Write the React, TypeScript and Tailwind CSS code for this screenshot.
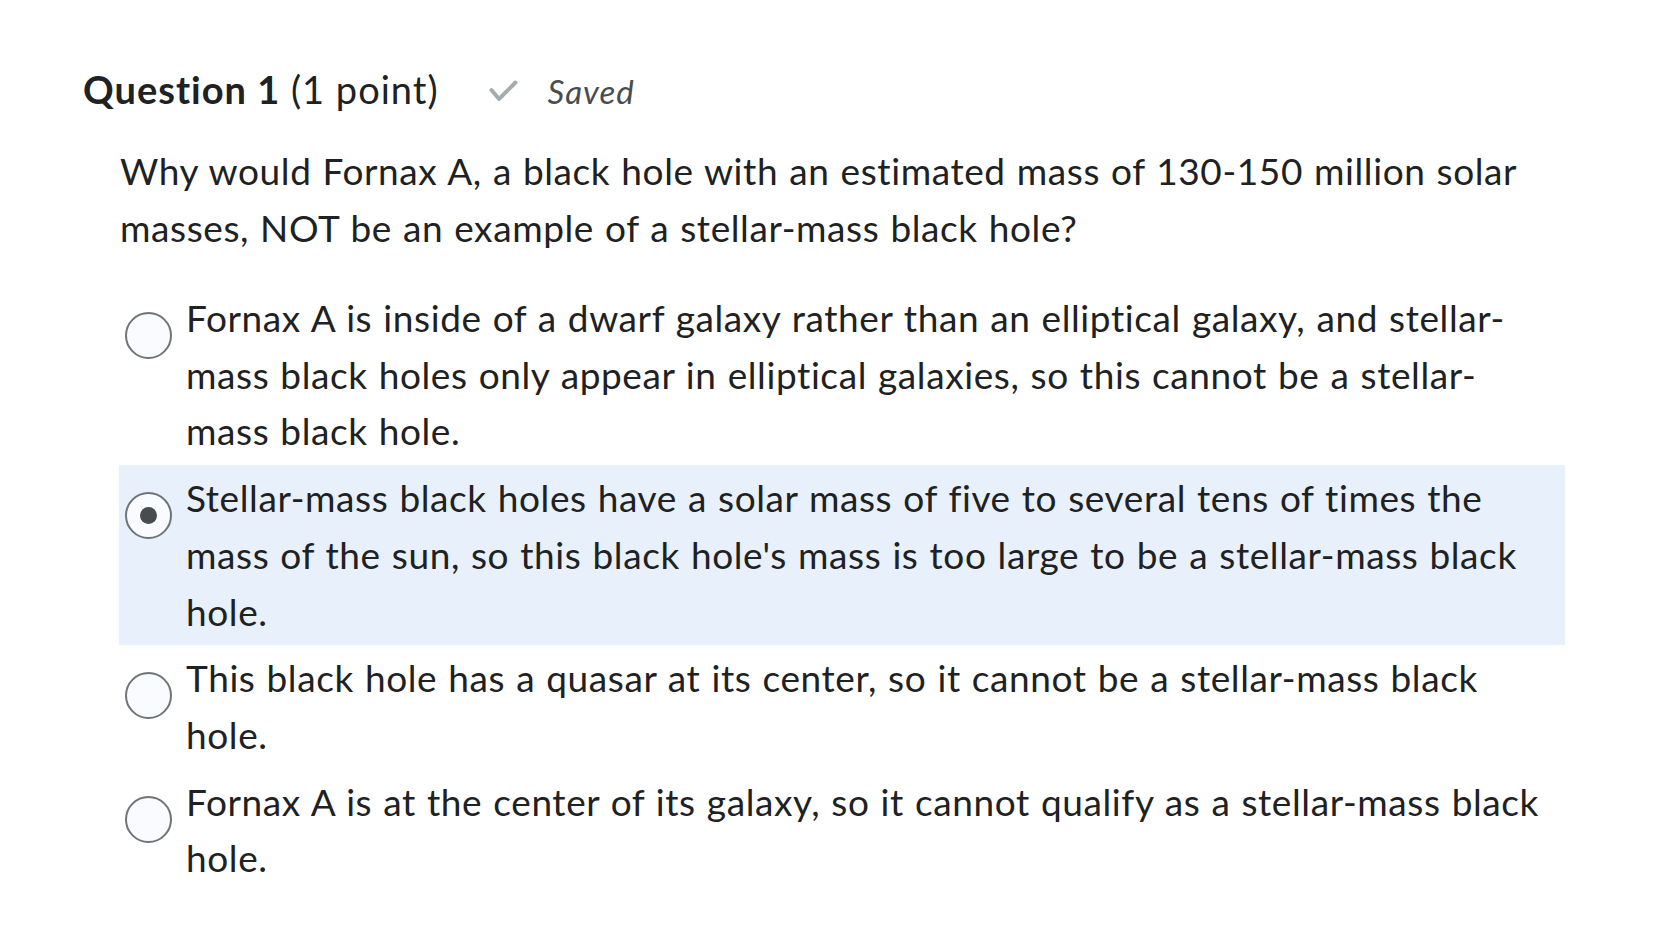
import React, { useState } from 'react';

const options = [
    'Fornax A is inside of a dwarf galaxy rather than an elliptical galaxy, and stellar-mass black holes only appear in elliptical galaxies, so this cannot be a stellar-mass black hole.',
    "Stellar-mass black holes have a solar mass of five to several tens of times the mass of the sun, so this black hole's mass is too large to be a stellar-mass black hole.",
    'This black hole has a quasar at its center, so it cannot be a stellar-mass black hole.',
    'Fornax A is at the center of its galaxy, so it cannot qualify as a stellar-mass black hole.',
];

const App: React.FC = () => {
    const [selected, setSelected] = useState<number>(1);

    return (
        <div className="min-h-screen bg-white text-[#202122] font-['Lato','Liberation_Sans',sans-serif] [font-variant-ligatures:none]">
            <div className="pt-[61px] pl-[83px]">
                {/* header */}
                <div className="flex items-baseline leading-[56px]">
                    <h2 className="text-[38px] tracking-[1px]">
                        <span className="font-bold">Question 1</span> <span>(1 point)</span>
                    </h2>
                    <svg
                        className="ml-[50px] self-center mt-[2px]"
                        width="29"
                        height="22"
                        viewBox="0 0 29 22"
                        fill="none"
                    >
                        <path
                            d="M2.5 10 L10 19 L26.5 2.5"
                            stroke="#a5acb0"
                            strokeWidth="4"
                            strokeLinecap="round"
                            strokeLinejoin="round"
                        />
                    </svg>
                    <span className="ml-[30px] text-[33px] tracking-[1px] italic text-[#494c4e]">Saved</span>
                </div>

                {/* question */}
                <p className="mt-[24px] ml-[37px] w-[1446px] text-[37px] leading-[56.5px] tracking-[0.6px] [word-spacing:1px]">
                    Why would Fornax A, a black hole with an estimated mass of 130-150 million solar masses, NOT be an example of a stellar-mass black hole?
                </p>

                {/* options */}
                <div className="mt-[29px] ml-[36px] w-[1446px] flex flex-col">
                    {options.map((text, i) => (
                        <label
                            key={i}
                            onClick={() => setSelected(i)}
                            className={`flex gap-[14px] px-[6px] py-[5px] cursor-pointer ${
                                selected === i ? 'bg-[#e8f0fb]' : ''
                            }`}
                        >
                            <span className="mt-[22px] w-[47px] h-[47px] shrink-0 rounded-full border-2 border-[#6e7477] bg-[#f9fbff] flex items-center justify-center">
                                {selected === i && <span className="w-[17px] h-[17px] rounded-full bg-[#494c4e]" />}
                            </span>
                            <span className="text-[37px] leading-[56.7px] tracking-[0.6px] [word-spacing:1px]">{text}</span>
                        </label>
                    ))}
                </div>
            </div>
        </div>
    );
};

export default App;
